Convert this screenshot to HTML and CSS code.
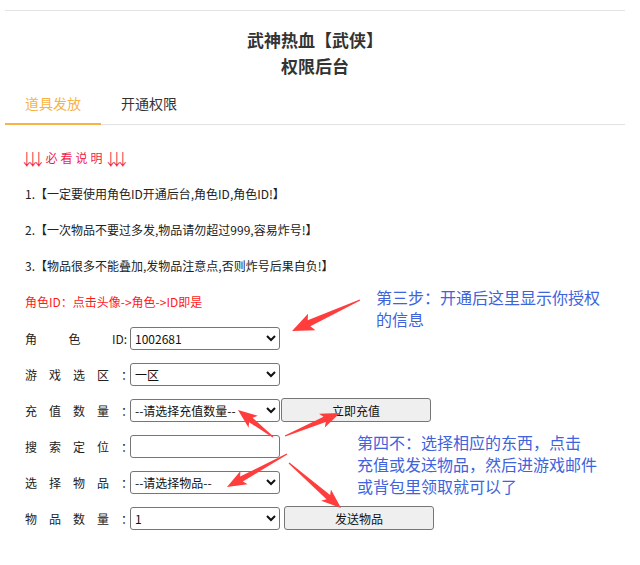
FILE: index.html
```html
<!DOCTYPE html>
<html lang="zh-CN">
<head>
<meta charset="utf-8">
<title>权限后台</title>
<link rel="stylesheet" href="styles.css">
</head>
<body>
<div class="page">
  <div class="title">武神热血【武侠】<br>权限后台</div>
  <ul class="tabs">
    <li class="active">道具发放</li>
    <li>开通权限</li>
  </ul>
  <div class="content">
    <p class="line warn"><span class="arr">↓↓↓</span><span class="must">必看说明</span><span class="arr">↓↓↓</span></p>
    <p class="line">1.【一定要使用角色ID开通后台,角色ID,角色ID!】</p>
    <p class="line">2.【一次物品不要过多发,物品请勿超过999,容易炸号!】</p>
    <p class="line">3.【物品很多不能叠加,发物品注意点,否则炸号后果自负!】</p>
    <p class="line red">角色ID：点击头像-&gt;角色-&gt;ID即是</p>
    <div class="row">
      <span class="label label-id"><span>角</span><span>色</span><span>ID:</span></span>
      <select class="field"><option>1002681</option></select>
    </div>
    <div class="row">
      <span class="label">游戏选区：</span>
      <select class="field"><option>一区</option></select>
    </div>
    <div class="row">
      <span class="label">充值数量：</span>
      <select class="field"><option>--请选择充值数量--</option></select>
      <button class="btn">立即充值</button>
    </div>
    <div class="row">
      <span class="label">搜索定位：</span>
      <input class="field input" type="text">
    </div>
    <div class="row">
      <span class="label">选择物品：</span>
      <select class="field"><option>--请选择物品--</option></select>
    </div>
    <div class="row">
      <span class="label">物品数量：</span>
      <select class="field"><option>1</option></select>
      <button class="btn btn-send">发送物品</button>
    </div>
  </div>
</div>

<div class="notes">
  <p class="note note-3">第三步：开通后这里显示你授权<br>的信息</p>
  <p class="note note-4">第四不：选择相应的东西，点击<br>充值或发送物品，然后进游戏邮件<br>或背包里领取就可以了</p>
  <svg class="arrows" width="640" height="565" viewBox="0 0 640 565">
    <g fill="#ff3d3d">
      <g transform="translate(360 300) rotate(155.5)">
        <polygon points="0,-0.6 56,-3.2 53,-9 74.7,0 53,9 56,3.2 0,0.6"/>
      </g>
      <g transform="translate(273 437) rotate(-142.4)">
        <polygon points="0,-0.6 28,-2.8 25,-7.5 44.2,0 25,7.5 28,2.8 0,0.6"/>
      </g>
      <g transform="translate(285 436) rotate(-22.7)">
        <polygon points="0,-0.6 43,-2.8 40,-7.5 59.6,0 40,7.5 43,2.8 0,0.6"/>
      </g>
      <g transform="translate(287 454) rotate(151.2)">
        <polygon points="0,-0.6 52,-2.8 49,-7.5 68.5,0 49,7.5 52,2.8 0,0.6"/>
      </g>
      <g transform="translate(289 463) rotate(40.9)">
        <polygon points="0,-0.6 52,-2.8 49,-7.5 68.8,0 49,7.5 52,2.8 0,0.6"/>
      </g>
    </g>
  </svg>
</div>
</body>
</html>
```

FILE: styles.css
```css
html, body {
  margin: 0;
  padding: 0;
  background: #fff;
}

body {
  position: relative;
  width: 640px;
  height: 565px;
  overflow: hidden;
  font-family: "Noto Sans CJK SC", "Liberation Sans", sans-serif;
  color: #222;
}

.page {
  margin: 10px 15px 0 5px;
  border-top: 1px solid #e4e4e4;
}

.title {
  text-align: center;
  font-weight: bold;
  font-size: 17px;
  line-height: 26px;
  padding-top: 16px;
  color: #333;
}

.tabs {
  list-style: none;
  margin: 4px 0 0;
  padding: 0;
  display: flex;
  border-bottom: 1px solid #e2e2e2;
}

.tabs li {
  padding: 0 20px;
  line-height: 40px;
  font-size: 14px;
  color: #333;
  border-bottom: 2px solid transparent;
  margin-bottom: -1px;
}

.tabs li.active {
  color: #f7b445;
  border-bottom-color: #f7b445;
}

.content {
  padding: 15px 20px 0;
}

.line {
  margin: 0;
  height: 36px;
  line-height: 36px;
  font-size: 12px;
  white-space: nowrap;
}

.warn {
  color: #f01c48;
}

.arr {
  display: inline-block;
  letter-spacing: -6.5px;
  margin-left: -4px;
  transform: scale(1.1, 1.35);
}

.must {
  letter-spacing: 3px;
  margin-left: 8px;
  margin-right: 3px;
}

.red {
  color: #ff1a1a;
}

.row {
  display: flex;
  align-items: center;
  height: 36px;
  font-size: 12px;
}

.label {
  width: 105px;
  flex-shrink: 0;
  letter-spacing: 12px;
  white-space: nowrap;
  color: #222;
}

.label-id {
  display: flex;
  justify-content: space-between;
  width: 102px;
  margin-right: 3px;
  letter-spacing: 0;
}

.field {
  width: 150px;
  height: 23px;
  box-sizing: border-box;
  font-size: 12px;
  font-family: "Noto Sans CJK SC", "Liberation Sans", sans-serif;
  color: #111;
  border: 1px solid #767676;
  border-radius: 3px;
  background: #fff;
  margin: 0;
}

.input {
  padding: 0 4px;
}

.btn {
  width: 150px;
  height: 24px;
  margin: 0 0 0 1px;
  padding: 0;
  font-size: 12px;
  font-family: "Noto Sans CJK SC", "Liberation Sans", sans-serif;
  color: #111;
  background: #efefef;
  border: 1px solid #767676;
  border-radius: 3px;
}

.btn-send {
  margin-left: 4px;
}

.notes {
  position: absolute;
  left: 0;
  top: 0;
  width: 640px;
  height: 565px;
  pointer-events: none;
}

.arrows {
  position: absolute;
  left: 0;
  top: 0;
}

.note {
  position: absolute;
  margin: 0;
  font-size: 16px;
  line-height: 22px;
  color: #3e63dc;
  white-space: nowrap;
}

.note-3 {
  left: 376px;
  top: 286px;
}

.note-4 {
  left: 357px;
  top: 431px;
}
```
